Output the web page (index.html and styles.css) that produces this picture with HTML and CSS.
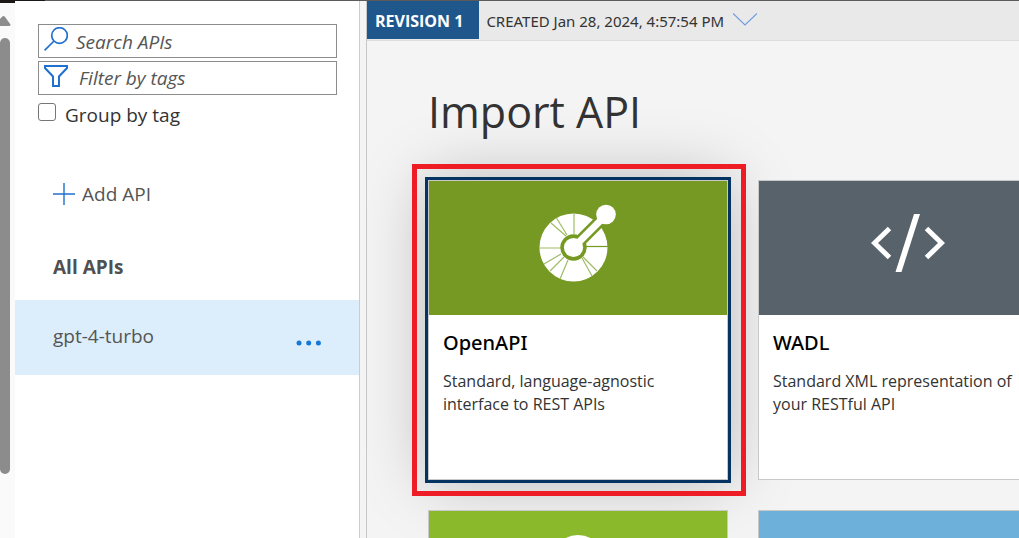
FILE: index.html
```html
<!DOCTYPE html>
<html lang="en">
<head>
<meta charset="utf-8">
<meta name="viewport" content="width=device-width, initial-scale=1">
<title>Import API</title>
<link rel="stylesheet" href="styles.css">
</head>
<body>
<div class="topline"><span class="topline-dark"></span></div>
<div class="shell">
  <div class="scroll-track" aria-hidden="true">
    <svg class="scroll-arrow" width="11" height="10" viewBox="0 0 11 10"><path d="M0 3 2.300 .6Q3.500-.4 4.700.6L10.500 8.500Q10.500 10 9 10H0z" fill="#8c8c8c"/></svg>
    <div class="scroll-thumb"></div>
  </div>

  <aside class="sidebar">
    <div class="filters">
      <div class="field">
        <svg width="24" height="24" viewBox="0 0 24 24" fill="none" stroke="#2070d0" stroke-width="1.700" aria-hidden="true"><circle cx="15.500" cy="8.500" r="7.800"/><path d="M10 14 .6 23.400"/></svg>
        <input type="text" placeholder="Search APIs" aria-label="Search APIs">
      </div>
      <div class="field">
        <svg width="24" height="24" viewBox="0 0 24 24" fill="none" stroke="#2070d0" stroke-width="2" aria-hidden="true"><path d="M1 2H23V4L15 12.500V22H9V12.500L1 4z"/></svg>
        <input class="tags" type="text" placeholder="Filter by tags" aria-label="Filter by tags">
      </div>
      <label class="group"><input type="checkbox">Group by tag</label>
    </div>
    <button class="add" type="button">
      <svg width="22" height="22" viewBox="0 0 22 22" fill="none" stroke="#2070d0" stroke-width="1.400" aria-hidden="true"><path d="M0 11H22M11 0V22"/></svg>
      Add API
    </button>
    <a class="all" href="#">All APIs</a>
    <div class="api">
      <a href="#">gpt-4-turbo</a>
      <button class="more" type="button" aria-label="More actions">
        <svg width="26" height="6" viewBox="0 0 26 6" fill="#1478d4" aria-hidden="true"><circle cx="3" cy="3" r="2.500"/><circle cx="12.700" cy="3" r="2.500"/><circle cx="22.400" cy="3" r="2.500"/></svg>
      </button>
    </div>
  </aside>

  <main class="main">
    <div class="revision-bar">
      <span class="revision">REVISION 1</span>
      <button class="created" type="button">CREATED Jan 28, 2024, 4:57:54 PM
        <svg width="24" height="13" viewBox="0 0 24 13" fill="none" stroke="#6e9de0" stroke-width="1.200" aria-hidden="true"><path d="M0 .5 12 12 24 .5"/></svg>
      </button>
    </div>
    <div class="content">
      <h1>Import API</h1>
      <div class="cards">
        <a class="card selected" href="#">
          <div class="banner openapi">
            <svg width="78" height="78" viewBox="0 0 78 78" aria-hidden="true">
              <circle cx="34.500" cy="43.500" r="34" fill="#fff"/>
              <g stroke="#9fbc64" stroke-width="1.200">
                <path d="M35 30V9M22 44H0M27 32 12 19M28 31 17.500 14M22 50 5 60M25 53 11 67M29 56 21 75M43 54 53 72M44 53 58 67"/>
                <path d="M47 42.500H69" stroke="#759922"/>
              </g>
              <path d="M34.500 43.500 72 6" stroke="#759922" stroke-width="12"/>
              <circle cx="34.500" cy="43.500" r="13.200" fill="#759922"/>
              <path d="M34.500 43.500 67 11" stroke="#fff" stroke-width="6.800"/>
              <circle cx="34.500" cy="43.500" r="9.600" fill="#fff"/>
              <circle cx="67" cy="10.500" r="9.800" fill="#fff"/>
            </svg>
          </div>
          <div class="text"><h2>OpenAPI</h2><p>Standard, language-agnostic interface to REST APIs</p></div>
        </a>
        <a class="card" href="#">
          <div class="banner wadl">
            <svg width="74" height="58" viewBox="0 0 74 58" aria-hidden="true"><path d="M18.500 14.500 3.500 29 18.500 43.500M55.500 14.500 70.500 29 55.500 43.500" fill="none" stroke="#fff" stroke-width="5"/><path d="M43 0H49L30.500 58H24.500z" fill="#fff"/></svg>
          </div>
          <div class="text"><h2>WADL</h2><p>Standard XML representation of your RESTful API</p></div>
        </a>
        <a class="card" href="#" aria-label="More import options">
          <div class="banner lime"><svg width="86" height="86" viewBox="0 0 86 86" aria-hidden="true"><ellipse cx="43" cy="43" rx="34" ry="43" fill="#fff"/></svg></div>
        </a>
        <a class="card" href="#" aria-label="More import options"><div class="banner sky"></div></a>
      </div>
    </div>
  </main>
</div>
</body>
</html>
```
FILE: styles.css
```css
* { box-sizing: border-box; }
body {
  margin: 0;
  height: 100vh;
  display: flex;
  flex-direction: column;
  overflow: hidden;
  font-family: "Open Sans", "Noto Sans", sans-serif;
  font-size: 19px;
  color: #333;
  background: #f4f4f4;
}
h1, h2, p { margin: 0; font-weight: 400; }
a { color: inherit; text-decoration: none; }
button { border: 0; padding: 0; background: none; font: inherit; color: inherit; }
svg { display: block; flex: none; }

.topline { height: 1px; flex: none; background: #5c5a5a; }
.topline-dark { display: block; width: 45px; height: 1px; background: #1d1818; }
.shell { flex: 1; min-height: 0; display: flex; }

.scroll-track { width: 15px; flex: none; background: #fafafa; border-top: 2px solid #1d1818; padding-top: 13px; }
.scroll-thumb { width: 10px; height: 436px; margin-top: 12px; border-radius: 5px; background: #8c8c8c; }

.sidebar { width: 345px; flex: none; background: #fff; border-right: 1px solid #ccc; }
.filters { padding: 23px 22px 0 23px; display: flex; flex-direction: column; gap: 3px; }
.field { display: flex; align-items: center; height: 34px; padding-left: 5px; border: 1px solid #8c8c8c; }
.field svg { margin-bottom: 4px; }
.field input { flex: 1; min-width: 0; height: 32px; border: 0; outline: 0; padding: 1px 0 0 8px; background: none; font: italic 19px "Open Sans", sans-serif; }
.field .tags { padding: 0 0 0 11px; }
.field input::placeholder { color: #555; opacity: 1; }
.group { display: flex; align-items: center; gap: 9px; padding-top: 3px; line-height: 28px; }
.group input { appearance: none; width: 18px; height: 18px; margin: 0 0 6px; border: 1px solid #767676; border-radius: 3px; background: #fff; }
.add { display: flex; align-items: center; gap: 7px; margin: 51px 0 0 38px; line-height: 28px; color: #555; }
.all { display: block; padding: 45px 0 19px 38px; line-height: 28px; font-weight: 700; color: #505050; }
.api { display: flex; align-items: center; justify-content: space-between; height: 75px; padding: 0 37px 3px 38px; background: #dceefb; color: #555; }
.more { padding-top: 13px; }

.main { flex: 1; min-width: 0; margin-left: 6px; border-left: 1px solid #c8c8c8; overflow: hidden; }
.revision-bar { display: flex; height: 40px; background: #e9e9e9; border-bottom: 1px solid #dcdcdc; font-size: 16px; line-height: 40px; }
.revision { height: 38px; padding: 0 16px 0 8px; background: #1f578d; color: #fff; font-weight: 700; }
.created { display: flex; align-items: center; gap: 9px; padding: 0 7px; font: 15px "Noto Sans", sans-serif; line-height: 40px; }
.created svg { margin-bottom: 2px; }

.content { padding: 39px 0 0 61px; }
h1 { font-size: 43px; line-height: 64px; }
.cards { display: grid; grid-template-columns: repeat(2, 300px); gap: 30px; margin-top: 36px; }
.card { position: relative; min-height: 300px; background: #fff; border: 1px solid #c8c8c8; }
.selected { outline: 3px solid #053463; box-shadow: 0 0 64px rgba(0, 0, 0, .26); }
.selected::after { content: ""; position: absolute; inset: -17px -19px -17px -17px; border: 5px solid #ee1c25; }
.banner { display: flex; align-items: center; justify-content: center; height: 134px; }
.openapi { background: #759922; padding-bottom: 10px; }
.wadl { background: #58626b; padding-bottom: 10px; }
.lime { background: #8ab92b; }
.sky { background: #6db1db; }
.text { padding: 13px 14px; }
h2 { font-size: 20px; line-height: 30px; font-weight: 500; font-family: "Noto Sans", sans-serif; color: #000; }
p { margin-top: 12px; font-size: 16px; line-height: 23px; }
```
